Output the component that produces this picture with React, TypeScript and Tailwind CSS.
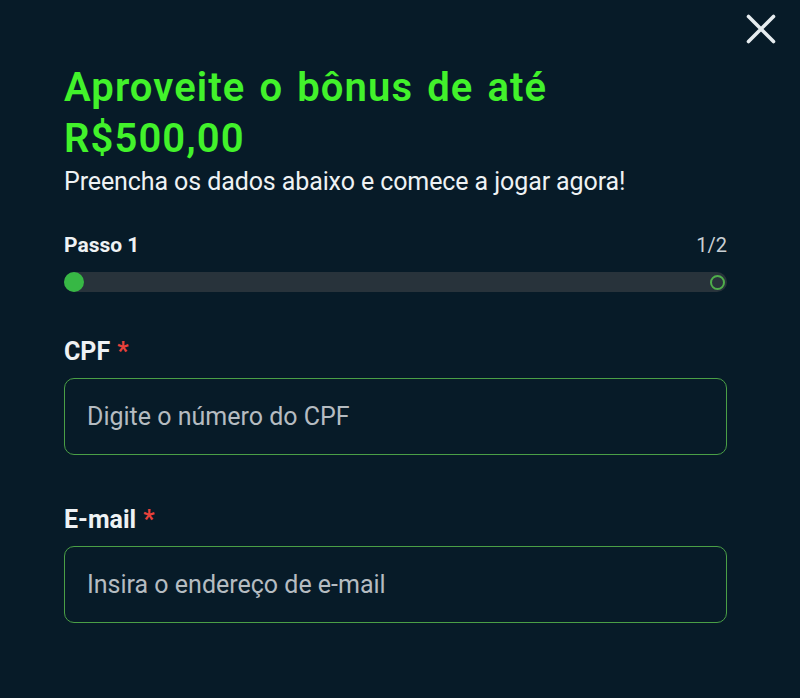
const CloseIcon = () => (
  <svg width="30" height="30" viewBox="0 0 30 30" fill="none">
    <path
      d="M2.5 2.5 27.5 27.5M27.5 2.5 2.5 27.5"
      stroke="currentColor"
      strokeWidth="3.6"
      strokeLinecap="round"
    />
  </svg>
);

const App = () => {
  return (
    <div className="relative min-h-[698px] w-full bg-[#071b28] font-['Roboto',sans-serif] text-white">
      {/* Close */}
      <button className="absolute right-[24px] top-[14px] text-[#e6ecef]">
        <CloseIcon />
      </button>

      <div className="pl-16 pr-[73px] pt-[62px]">
        {/* Header */}
        <h1 className="text-[40px] font-semibold leading-[51px] tracking-[1.1px] [word-spacing:3px] text-[#42f22b]">
          Aproveite o bônus de até
          <br />
          R$500,00
        </h1>
        <p className="mt-[3px] text-[25px] leading-[30px] tracking-[-0.1px] text-[#eef2f4]">
          Preencha os dados abaixo e comece a jogar agora!
        </p>

        {/* Step */}
        <div className="mt-[36px] flex items-baseline justify-between leading-[24px]">
          <span className="text-[21px] font-bold text-[#eef2f4]">Passo 1</span>
          <span className="text-[20px] text-[#c9d0d4]">1/2</span>
        </div>
        <div className="mt-[15px] flex h-5 items-center justify-between rounded-full bg-[#28333b]">
          <div className="h-5 w-5 rounded-full bg-[#37b845]" />
          <div className="mr-[2px] h-[15px] w-[15px] rounded-full border-2 border-[#4fae4b]" />
        </div>

        {/* CPF */}
        <div className="mt-[45px]">
          <label className="flex items-center gap-[7px] text-[25px] font-bold leading-[30px] text-[#eef2f4]">
            CPF <span className="text-[#e8413b]">*</span>
          </label>
          <div className="mt-[11px] flex h-[77px] items-center rounded-[10px] border border-[#4a9f46] px-[22px]">
            <input
              className="w-full bg-transparent text-[25px] text-white outline-none placeholder:text-[#b5bcc1]"
              placeholder="Digite o número do CPF"
            />
          </div>
        </div>

        {/* Email */}
        <div className="mt-[50px]">
          <label className="flex items-center gap-[7px] text-[25px] font-bold leading-[30px] text-[#eef2f4]">
            E-mail <span className="text-[#e8413b]">*</span>
          </label>
          <div className="mt-[11px] flex h-[77px] items-center rounded-[10px] border border-[#4a9f46] px-[22px]">
            <input
              className="w-full bg-transparent text-[25px] text-white outline-none placeholder:text-[#b5bcc1]"
              placeholder="Insira o endereço de e-mail"
            />
          </div>
        </div>
      </div>
    </div>
  );
};

export default App;
